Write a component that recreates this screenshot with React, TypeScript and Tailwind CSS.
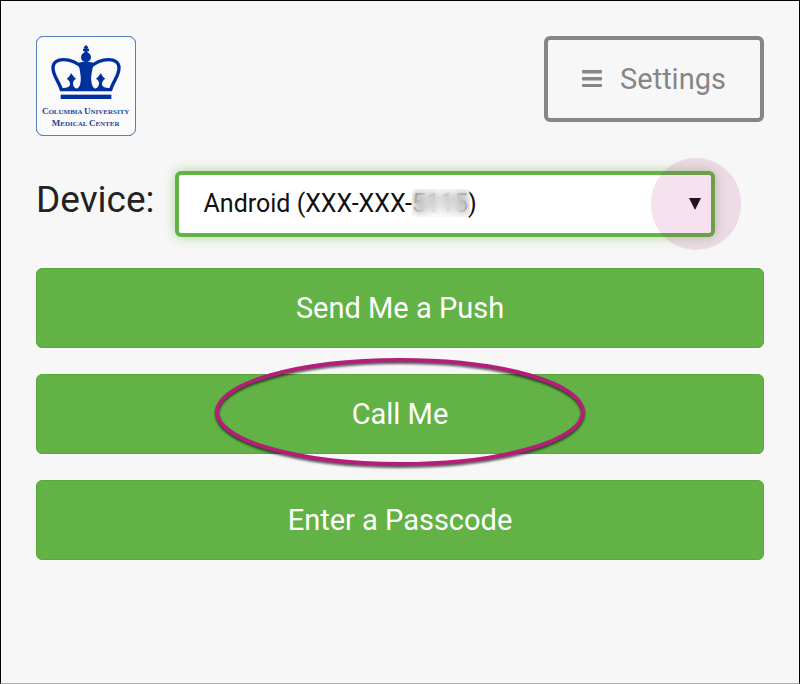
import { useState } from 'react';

const actions = ['Send Me a Push', 'Call Me', 'Enter a Passcode'];

function Logo() {
  return (
    <svg viewBox="30 30 300 300" className="h-[100px] w-[100px]" role="img" aria-label="Columbia University Medical Center">
      <rect x="31" y="31" width="298" height="298" rx="22" fill="#fafafa" stroke="#2d6cae" strokeWidth="3" />
      <g fill="#00309c">
        {/* cross and orb */}
        <path d="M180 57l7 7-3 4 5 0v8l-5-1 2 8h-12l2-8-5 1v-8l5 0-3-4z" />
        <circle cx="180" cy="94" r="15" />
        {/* arches */}
        <g fill="none" stroke="#00309c" strokeWidth="10">
          <path d="M106 192C100 168 81 150 81 126C81 108 95 101 112 101C135 101 155 111 169 126" />
          <path d="M254 192C260 168 279 150 279 126C279 108 265 101 248 101C225 101 205 111 191 126" />
        </g>
        {/* centre and side leaves */}
        <path d="M158 110Q180 104 202 110C199 135 194 150 196 165C197 178 201 186 208 188V196H152V188C159 186 163 178 164 165C166 150 161 135 158 110z" />
        <path d="M135 141C139 147 144 154 150 158C144 162 141 166 141 172C141 181 145 186 153 188V196H102V185C118 188 129 184 132 176C133 170 130 163 122 158C128 155 133 148 135 141z" />
        <path d="M225 141C221 147 216 154 210 158C216 162 219 166 219 172C219 181 215 186 207 188V196H258V185C242 188 231 184 228 176C227 170 230 163 238 158C232 155 227 148 225 141z" />
        <rect x="104" y="206" width="152" height="13" />
      </g>
      <g fill="#1d449f" fontFamily="'Liberation Serif', serif" fontSize="21" fontWeight="bold" textAnchor="middle">
        <text x="179" y="263"><tspan fontSize="27">C</tspan>OLUMBIA <tspan fontSize="27">U</tspan>NIVERSITY</text>
        <text x="179" y="300"><tspan fontSize="27">M</tspan>EDICAL <tspan fontSize="27">C</tspan>ENTER</text>
      </g>
    </svg>
  );
}

export default function App() {
  const [device, setDevice] = useState('android');

  return (
    <div className="min-h-screen border border-black border-b-[#aaaeb2] bg-[#f7f7f7] px-[35px] pt-[35px] pb-8 font-['Roboto',sans-serif]">
      <header className="flex items-start justify-between">
        <Logo />
        <button
          type="button"
          className="flex h-[86px] w-[220px] items-center justify-center gap-[18px] rounded-md border-4 border-[#868686] text-[29px] text-[#868686]"
        >
          <svg viewBox="0 0 20 18" className="h-[18px] w-5" fill="currentColor" aria-hidden="true">
            <rect y="0" width="20" height="3.5" rx="1" />
            <rect y="7" width="20" height="3.5" rx="1" />
            <rect y="14" width="20" height="3" rx="1" />
          </svg>
          <span className="pt-0.5">Settings</span>
        </button>
      </header>

      <main>
        <div className="mt-[35px] mr-[49px] flex items-start gap-5">
          <label htmlFor="device" className="pt-1 text-[37px] leading-[50px] text-[#222]">
            Device:
          </label>
          <div className="relative flex-1">
            <select
              id="device"
              value={device}
              onChange={(e) => setDevice(e.target.value)}
              className="block h-[66px] w-full appearance-none rounded-md border-4 border-[#63b246] bg-white pl-[25px] text-[25px] text-[#111] shadow-[0_0_12px_#63b24680] outline-none"
            >
              <option value="android">Android (XXX-XXX-5115)</option>
            </select>
            {/* hides the last digits of the phone number */}
            <span className="absolute top-[18px] left-[237px] h-7 w-[58px] rounded-sm bg-white/20 backdrop-blur-[5px]" />
            <svg viewBox="0 0 12 12" className="absolute top-[27px] right-[14px] size-3" aria-hidden="true">
              <path d="M0 0h12L6 12z" fill="#111" />
            </svg>
            <span className="pointer-events-none absolute -top-[13px] -right-[26px] h-[92px] w-[90px] rounded-full bg-[#b41e78]/13" />
          </div>
        </div>

        <div className="mt-[31px] flex flex-col gap-[26px]">
          {actions.map((label) => (
            <div key={label} className="relative">
              <button
                type="button"
                className="h-20 w-full rounded-md border border-[#58a83b] bg-[#63b246] pt-0.5 text-[29px] text-white"
              >
                {label}
              </button>
              {label === 'Call Me' && (
                <svg
                  viewBox="0 0 376 116"
                  className="pointer-events-none absolute -top-[19px] left-1/2 h-[116px] w-[376px] -translate-x-1/2 drop-shadow-[0_2px_1px_#000000a0]"
                  aria-hidden="true"
                >
                  <ellipse cx="188" cy="57" rx="183" ry="52" fill="none" stroke="#b41e78" strokeWidth="4" />
                </svg>
              )}
            </div>
          ))}
        </div>
      </main>
    </div>
  );
}
